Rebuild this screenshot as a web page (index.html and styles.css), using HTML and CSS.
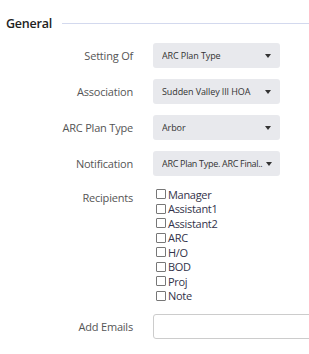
FILE: index.html
```html
<!DOCTYPE html>
<html lang="en">
<head>
  <meta charset="UTF-8">
  <meta name="viewport" content="width=device-width, initial-scale=1.0">
  <title>General Settings</title>
  <link rel="stylesheet" href="styles.css">
</head>
<body>
  <section class="panel">
    <!-- Section title -->
    <div class="legend">
      <h2>General</h2>
      <span class="rule"></span>
    </div>

    <div class="form">
      <label class="label">Setting Of</label>
      <div class="select"><span>ARC Plan Type</span><i class="caret"></i></div>

      <label class="label">Association</label>
      <div class="select"><span>Sudden Valley III HOA</span><i class="caret"></i></div>

      <label class="label">ARC Plan Type</label>
      <div class="select"><span>Arbor</span><i class="caret"></i></div>

      <label class="label">Notification</label>
      <div class="select tight"><span>ARC Plan Type. ARC Final..</span><i class="caret"></i></div>

      <label class="label top">Recipients</label>
      <ul class="checks">
        <li><span class="box"></span>Manager</li>
        <li><span class="box"></span>Assistant1</li>
        <li><span class="box"></span>Assistant2</li>
        <li><span class="box"></span>ARC</li>
        <li><span class="box"></span>H/O</li>
        <li><span class="box"></span>BOD</li>
        <li><span class="box"></span>Proj</li>
        <li><span class="box"></span>Note</li>
      </ul>

      <label class="label">Add Emails</label>
      <div class="input"></div>
    </div>
  </section>
</body>
</html>
```

FILE: styles.css
```css
body {
  margin: 0;
  font-family: 'Open Sans', sans-serif;
  background: #fff;
  color: #333;
  overflow: hidden;
}
.panel {
  padding: 14px 0 0 6px;
}
.legend {
  display: flex;
  align-items: center;
  gap: 10px;
  height: 18px;
}
.legend h2 {
  margin: 0;
  font-size: 12.5px;
  font-weight: 600;
  letter-spacing: -0.2px;
  color: #222;
}
.rule {
  flex: 1;
  height: 1px;
  background: #d3d9ee;
}
.form {
  display: grid;
  grid-template-columns: 127px 180px;
  column-gap: 20px;
  row-gap: 11px;
  margin-top: 11px;
  align-items: center;
}
.label {
  text-align: right;
  font-size: 11px;
  letter-spacing: -0.2px;
  color: #555;
}
.label.top {
  align-self: start;
  padding-top: 3px;
}
.select {
  width: 127px;
  height: 25px;
  box-sizing: border-box;
  background: #e8e9ed;
  border-radius: 3px;
  display: flex;
  align-items: center;
  padding: 0 9px;
  font-size: 9px;
  letter-spacing: -0.1px;
  color: #333;
}
.select span {
  flex: 1;
  white-space: nowrap;
  overflow: hidden;
}
.select.tight {
  padding: 0 8px 0 9px;
  letter-spacing: -0.3px;
}
.caret {
  width: 0;
  height: 0;
  border-left: 3px solid transparent;
  border-right: 3px solid transparent;
  border-top: 4px solid #333;
}
.checks {
  list-style: none;
  margin: 0;
  padding: 0 0 0 3px;
}
.checks li {
  display: flex;
  align-items: center;
  height: 14.5px;
  font-size: 11px;
  letter-spacing: -0.3px;
  color: #33334a;
}
.box {
  width: 8px;
  height: 8px;
  border: 1px solid #777;
  border-radius: 1px;
  margin-right: 2px;
}
.input {
  height: 25px;
  box-sizing: border-box;
  border: 1px solid #ccc;
  border-radius: 3px;
}
```
